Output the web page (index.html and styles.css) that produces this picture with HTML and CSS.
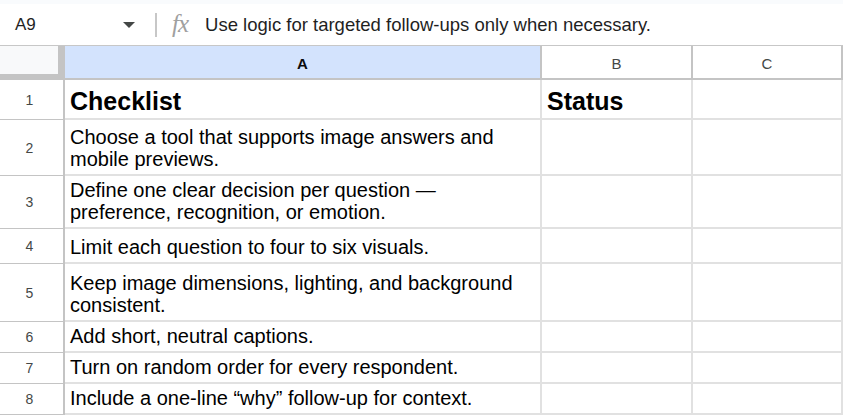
FILE: index.html
```html
<!DOCTYPE html>
<html>
<head>
<meta charset="utf-8">
<link rel="stylesheet" href="styles.css">
</head>
<body>
<div class="toolbar">
  <div class="namebox">
    <span class="ref">A9</span>
    <span class="caret"></span>
  </div>
  <span class="sep"></span>
  <span class="fx">fx</span>
  <span class="formula">Use logic for targeted follow-ups only when necessary.</span>
</div>
<div class="sheet">
  <div class="corner"></div>
  <div class="colhead sel">A</div>
  <div class="colhead">B</div>
  <div class="colhead">C</div>

  <div class="rowhead">1</div>
  <div class="cell title">Checklist</div>
  <div class="cell title">Status</div>
  <div class="cell"></div>

  <div class="rowhead">2</div>
  <div class="cell">Choose a tool that supports image answers and mobile previews.</div>
  <div class="cell"></div>
  <div class="cell"></div>

  <div class="rowhead">3</div>
  <div class="cell">Define one clear decision per question — preference, recognition, or emotion.</div>
  <div class="cell"></div>
  <div class="cell"></div>

  <div class="rowhead">4</div>
  <div class="cell">Limit each question to four to six visuals.</div>
  <div class="cell"></div>
  <div class="cell"></div>

  <div class="rowhead">5</div>
  <div class="cell">Keep image dimensions, lighting, and background consistent.</div>
  <div class="cell"></div>
  <div class="cell"></div>

  <div class="rowhead">6</div>
  <div class="cell">Add short, neutral captions.</div>
  <div class="cell"></div>
  <div class="cell"></div>

  <div class="rowhead">7</div>
  <div class="cell">Turn on random order for every respondent.</div>
  <div class="cell"></div>
  <div class="cell"></div>

  <div class="rowhead">8</div>
  <div class="cell">Include a one-line “why” follow-up for context.</div>
  <div class="cell"></div>
  <div class="cell"></div>
</div>
</body>
</html>
```

FILE: styles.css
```css
html, body {
  margin: 0;
  padding: 0;
  background: #ffffff;
  overflow: hidden;
}
body {
  width: 843px;
  height: 415px;
  font-family: "Liberation Sans", Arial, sans-serif;
  color: #000;
}
.toolbar {
  height: 41px;
  border-top: 4px solid #f9fbfd;
  border-bottom: 1px solid #c7c7c7;
  display: flex;
  align-items: center;
}
.namebox {
  width: 148px;
  display: flex;
  align-items: center;
  justify-content: space-between;
  padding-left: 15px;
  box-sizing: border-box;
  padding-right: 13px;
}
.ref {
  font-family: "Liberation Sans", Arial, sans-serif;
  font-size: 17px;
  color: #1f1f1f;
}
.caret {
  width: 0;
  height: 0;
  border-left: 6px solid transparent;
  border-right: 6px solid transparent;
  border-top: 6px solid #444746;
}
.sep {
  width: 2px;
  height: 24px;
  background: #c7c7c7;
  margin-left: 7px;
}
.fx {
  font-family: "Liberation Serif", serif;
  font-style: italic;
  font-size: 25px;
  color: #a0a0a0;
  margin-left: 15px;
  letter-spacing: -1px;
  line-height: 1;
  margin-top: -3px;
}
.formula {
  font-family: "Liberation Sans", Arial, sans-serif;
  font-size: 18.5px;
  color: #1f1f1f;
  margin-left: 17px;
}
.sheet {
  display: grid;
  grid-template-columns: 65px 477px 151px 1fr;
  grid-template-rows: 34px 40px 56px 53px 35px 58px 31px 31px 31px;
}
.corner {
  background: #f8f9fa;
  border-right: 7px solid #c4c4c4;
  border-bottom: 6px solid #c4c4c4;
  box-sizing: border-box;
  width: 65px;
}
.colhead {
  display: flex;
  align-items: center;
  justify-content: center;
  font-family: "Liberation Sans", Arial, sans-serif;
  font-size: 15px;
  color: #444746;
  border-right: 2px solid #c4c4c4;
  border-bottom: 2px solid #c4c4c4;
  box-sizing: border-box;
  padding-top: 2px;
}
.colhead.sel {
  background: #d3e3fd;
  color: #0b0b0b;
  font-weight: bold;
}
.rowhead {
  display: flex;
  align-items: center;
  justify-content: center;
  font-size: 14px;
  color: #444746;
  border-right: 2px solid #c4c4c4;
  border-bottom: 1px solid #c4c4c4;
  box-sizing: border-box;
  padding-right: 4px;
}
.cell {
  border-right: 2px solid #e1e1e1;
  border-bottom: 2px solid #e1e1e1;
  box-sizing: border-box;
  padding: 0 6px 4px 5px;
  display: flex;
  align-items: flex-end;
  font-size: 20px;
  line-height: 22px;
}
.cell.title {
  font-weight: bold;
  font-size: 25px;
  line-height: 28px;
  padding-bottom: 3px;
}
```
